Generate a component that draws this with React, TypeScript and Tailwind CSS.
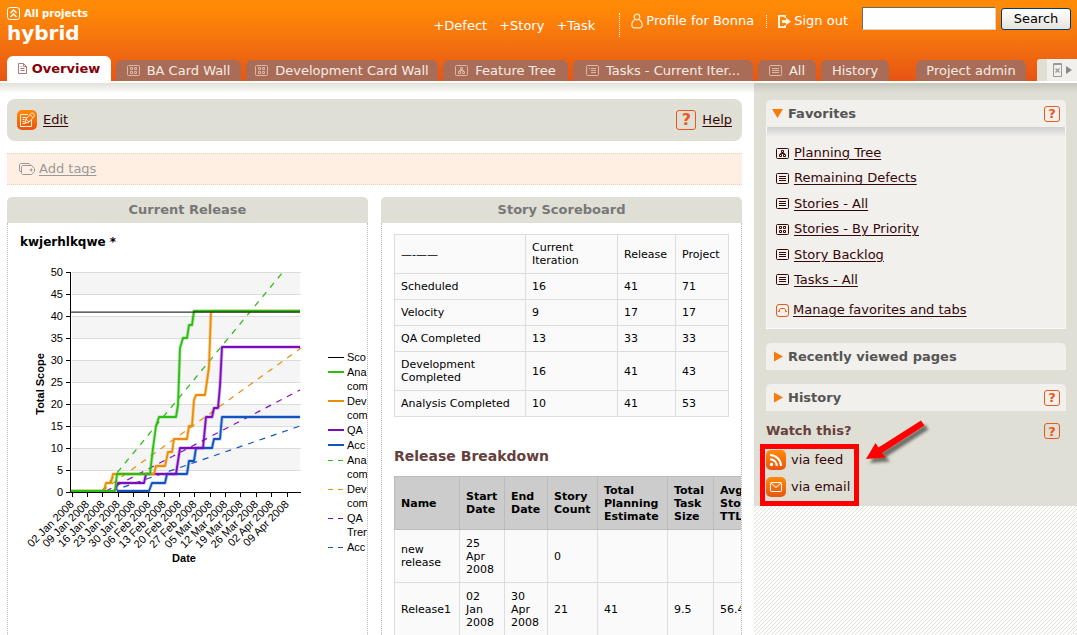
import React from "react";

type IconKind = "page" | "cards" | "tree" | "tasks" | "list";

function BoxIcon({ kind, className }: { kind: IconKind; className?: string }) {
  if (kind === "page") {
    return (
      <svg width="9" height="11" viewBox="0 0 9 11" fill="none" stroke="currentColor" className={className} aria-hidden="true">
        <path d="M.5 .5h5l3 3v7h-8zM5.5 .5v3h3M2.5 3.5h1M2.5 5.5h4M2.5 7.5h4" />
      </svg>
    );
  }
  return (
    <svg width="13" height="11" viewBox="0 0 13 11" fill="none" stroke="currentColor" className={className} aria-hidden="true">
      <rect x=".5" y=".5" width="12" height="10" rx="1" />
      {kind === "cards" && <path d="M3.5 2.5h2v2h-2zM7.5 2.5h2v2h-2zM3.5 6.5h2v2h-2zM7.5 6.5h2v2h-2z" />}
      {kind === "tree" && <path d="M5.5 2.5h2v2h-2zM3.5 6.5h2v2h-2zM7.5 6.5h2v2h-2zM6.5 4.5v1M4.5 6V5.5h4V6" />}
      {kind === "tasks" && <path d="M3 3.5h1M5 3.5h5M5 5.5h5M5 7.5h5" />}
      {kind === "list" && <path d="M3 3.5h7M3 5.5h7M3 7.5h7" />}
    </svg>
  );
}

function HelpMark({ large = false }: { large?: boolean }) {
  return (
    <button
      type="button"
      aria-label="Help on this section"
      className={
        large
          ? "flex size-5 items-center justify-center rounded-[3px] border border-[#e85a1b] text-base leading-none font-bold text-[#e85a1b]"
          : "flex size-4 items-center justify-center rounded-[3px] border border-[#e85a1b] text-[13px] leading-none font-bold text-[#e85a1b]"
      }
    >
      ?
    </button>
  );
}

const tabs: { label: string; icon?: IconKind; width: string }[] = [
  { label: "BA Card Wall", icon: "cards", width: "w-[125px]" },
  { label: "Development Card Wall", icon: "cards", width: "w-[192px]" },
  { label: "Feature Tree", icon: "tree", width: "w-[125px]" },
  { label: "Tasks - Current Iter...", icon: "tasks", width: "w-[180px]" },
  { label: "All", icon: "list", width: "w-[58px]" },
  { label: "History", width: "w-[68px]" },
];

const tabClass =
  "flex h-[21px] shrink-0 items-center justify-center gap-[7px] whitespace-nowrap rounded-t-[6px] bg-[#a96d57] text-[13px] text-[#f6ece6]";

function Header() {
  return (
    <header className="flex h-[81px] shrink-0 flex-col justify-between bg-linear-to-b from-[#ff8a06] from-10% to-[#e75413]">
      <div className="flex items-start justify-between pr-[6px] pl-[7px] text-white">
        <div className="pt-[7px]">
          <a href="#projects" className="flex h-[13px] items-center gap-1 text-[10px] font-bold">
            <svg width="13" height="13" viewBox="0 0 13 13" fill="none" stroke="currentColor" aria-hidden="true">
              <rect x=".5" y=".5" width="12" height="12" rx="2.5" />
              <path d="M3.5 6L6.5 3l3 3M3.5 10l3-3 3 3" strokeWidth="1.3" />
            </svg>
            All projects
          </a>
          <h1 className="text-xl leading-[26px] font-bold">hybrid</h1>
        </div>
        <div className="flex items-start text-[13px] leading-[18px] whitespace-nowrap">
          <nav className="flex gap-3 pt-[17px] pr-6" aria-label="Add card">
            <a href="#defect">+Defect</a>
            <a href="#story">+Story</a>
            <a href="#task">+Task</a>
          </nav>
          <div className="mt-[13px] h-6 border-l border-dotted border-white" />
          <a href="#profile" className="mt-3 flex items-center gap-[3px] pr-3 pl-[11px]">
            <svg width="12" height="16" viewBox="0 0 12 16" fill="none" stroke="#ffe9c4" strokeWidth="1.2" aria-hidden="true">
              <circle cx="6" cy="4" r="2.8" />
              <path d="M4.300 6.200C2 7.500 .8 9.600 .8 12c0 2 1.200 2.800 2.800 2.800h4.800c1.600 0 2.800-.8 2.800-2.800 0-2.400-1.200-4.500-3.500-5.800" />
            </svg>
            Profile for Bonna
          </a>
          <div className="mt-[15px] h-[13px] border-l border-dotted border-white" />
          <a href="#signout" className="mt-3 flex items-center gap-[3px] pr-3.5 pl-[11px]">
            <svg width="13" height="13" viewBox="0 0 13 13" fill="#fff3dc" aria-hidden="true">
              <path d="M0 0h8v3H6.500V1.800H2v9.400h4.500V10H8v3H0z" />
              <path d="M4 5h4V2.800L13 6.500 8 10.200V8H4z" />
            </svg>
            Sign out
          </a>
          <form className="flex items-start gap-[5px] pt-[7px]" onSubmit={(e) => e.preventDefault()}>
            <input
              type="text"
              aria-label="Search text"
              className="h-[23px] w-[134px] border border-t-[#6b6b62] border-r-[#d8d5ca] border-b-[#d8d5ca] border-l-[#6b6b62] bg-white px-1 text-black outline-none"
            />
            <button
              type="submit"
              className="mt-px h-[22px] w-[70px] rounded-[3px] border border-[#003c74] bg-linear-to-b from-white to-[#e6e4dc] text-[13px] leading-5 text-black"
            >
              Search
            </button>
          </form>
        </div>
      </div>
      <nav className="flex items-end gap-[5px] pl-[7px]" aria-label="Tabs">
        <a
          href="#overview"
          className="flex h-[25px] w-[104px] shrink-0 items-center justify-center gap-[5px] rounded-t-[6px] bg-white text-[13px] font-bold text-[#850309]"
        >
          <BoxIcon kind="page" className="text-[#b07a74]" />
          Overview
        </a>
        {tabs.map((t) => (
          <a key={t.label} href="#tab" className={`${tabClass} ${t.width}`}>
            {t.icon && <BoxIcon kind={t.icon} className="text-[#dcb7a8]" />}
            {t.label}
          </a>
        ))}
        <a href="#admin" className={`${tabClass} ml-[22px] w-[110px]`}>
          Project admin
        </a>
        <button
          type="button"
          aria-label="Toggle sidebar"
          className="ml-auto flex h-[22px] w-10 shrink-0 items-center gap-1 rounded-tl-[3px] border-l-10 border-[#dfdfd5] bg-[#f1f0ec] pl-1.5"
        >
          <svg width="9" height="14" viewBox="0 0 9 14" className="shrink-0" fill="none" stroke="#999" aria-hidden="true">
            <path d="M.5 .5h8v13h-8zM0 1.500h9" />
            <path d="M2.500 5.500l4 4M6.500 5.500l-4 4" strokeWidth="1.300" />
          </svg>
          <svg width="6" height="8" viewBox="0 0 6 8" className="shrink-0" fill="#888" aria-hidden="true">
            <path d="M0 0l6 4-6 4z" />
          </svg>
        </button>
      </nav>
    </header>
  );
}

type Pt = [number, number];

const GREEN = "#2dbd14";
const ORANGE = "#ea8e06";
const PURPLE = "#7c0bbd";
const BLUE = "#1154c0";

const series: { color: string; points: Pt[] }[] = [
  {
    color: BLUE,
    points: [[117, 491], [149, 491], [152, 483], [165, 483], [167, 474], [187, 474], [189, 461], [194, 461], [196, 448], [212, 448], [214, 439], [220, 439], [222, 417], [300, 417]],
  },
  {
    color: PURPLE,
    points: [[115, 491], [118, 483], [144, 483], [146, 474], [176, 474], [180, 448], [203, 448], [206, 417], [212, 417], [214, 408], [218, 408], [220, 386], [222, 347], [300, 347]],
  },
  {
    color: ORANGE,
    points: [[71, 491], [104, 491], [106, 483], [111, 483], [113, 474], [154, 474], [156, 466], [165, 466], [168, 452], [172, 452], [174, 439], [187, 439], [189, 426], [192, 426], [194, 400], [196, 395], [205, 395], [209, 367], [211, 311], [300, 311]],
  },
  {
    color: GREEN,
    points: [[71, 491], [115, 491], [117, 474], [150, 474], [153, 448], [156, 426], [159, 417], [176, 417], [178, 405], [180, 348], [183, 338], [187, 338], [189, 325], [192, 325], [194, 311], [300, 311]],
  },
];

const trends: { color: string; from: Pt; to: Pt }[] = [
  { color: GREEN, from: [102, 491], to: [283, 272] },
  { color: ORANGE, from: [102, 491], to: [301, 348] },
  { color: PURPLE, from: [106, 491], to: [300, 390] },
  { color: BLUE, from: [112, 491], to: [300, 426] },
];

const dates = [
  "02 Jan 2008", "09 Jan 2008", "16 Jan 2008", "23 Jan 2008", "30 Jan 2008",
  "06 Feb 2008", "13 Feb 2008", "20 Feb 2008", "27 Feb 2008", "05 Mar 2008",
  "12 Mar 2008", "19 Mar 2008", "26 Mar 2008", "02 Apr 2008", "09 Apr 2008",
];

const legend: { y: number; text: string; color?: string; dash?: boolean; thin?: boolean }[] = [
  { y: 357, text: "Sco", color: "#000", thin: true },
  { y: 372, text: "Ana", color: GREEN },
  { y: 386, text: "com" },
  { y: 401, text: "Dev", color: ORANGE },
  { y: 415, text: "com" },
  { y: 430, text: "QA", color: PURPLE },
  { y: 445, text: "Acc", color: BLUE },
  { y: 460, text: "Ana", color: GREEN, dash: true },
  { y: 474, text: "com" },
  { y: 489, text: "Dev", color: ORANGE, dash: true },
  { y: 503, text: "com" },
  { y: 518, text: "QA", color: PURPLE, dash: true },
  { y: 532, text: "Tren" },
  { y: 547, text: "Acc", color: BLUE, dash: true },
];

const toPath = (pts: Pt[]) => pts.map((p) => p.join(",")).join(" ");

function BurnUpChart() {
  return (
    <svg
      width="347"
      height="310"
      viewBox="20 262 347 310"
      className="block overflow-hidden font-['Liberation_Sans',sans-serif] text-[11px]"
      role="img"
      aria-label="Total scope by date"
    >
      {[0, 2, 4, 6, 8].map((i) => (
        <rect key={i} x="72" y={272 + i * 22} width="228" height="22" fill="#f5f5f5" />
      ))}
      {Array.from({ length: 11 }, (_, i) => {
        const y = 272 + i * 22;
        return (
          <g key={i}>
            <path d={`M72 ${y + 0.5}h229`} stroke="#dcdcdc" />
            <path d={`M66 ${y + 0.5}h4`} stroke="#000" />
            <text x="63" y={y + 4} textAnchor="end">
              {50 - i * 5}
            </text>
          </g>
        );
      })}
      {trends.map((t) => (
        <line
          key={t.color}
          x1={t.from[0]}
          y1={t.from[1]}
          x2={t.to[0]}
          y2={t.to[1]}
          stroke={t.color}
          strokeWidth="1.200"
          strokeDasharray="6 6"
        />
      ))}
      {series.map((s) => (
        <g key={s.color} fill="none" strokeLinejoin="round" stroke={s.color}>
          <polyline points={toPath(s.points)} strokeWidth="3.500" opacity=".3" />
          <polyline points={toPath(s.points)} strokeWidth="1.800" />
        </g>
      ))}
      <path d="M71 311.500h229" stroke="#000" opacity=".4" />
      <path d="M71 312.500h229" stroke="#2a2323" opacity=".7" />
      <path d="M70.500 272v220.500H301" fill="none" stroke="#000" />
      {dates.map((d, i) => {
        const x = 71.5 + i * 15.36;
        return (
          <g key={d}>
            <path d={`M${Math.round(x) + 0.5} 492v5`} stroke="#000" />
            <text transform={`translate(${x + 3} 505) rotate(-45)`} textAnchor="end">
              {d}
            </text>
          </g>
        );
      })}
      <text transform="translate(44 384) rotate(-90)" textAnchor="middle" fontWeight="bold">
        Total Scope
      </text>
      <text x="184" y="562" textAnchor="middle" fontWeight="bold">
        Date
      </text>
      {legend.map((l) => (
        <g key={l.y}>
          {l.color && (
            <path
              d={`M328 ${l.thin || l.dash ? l.y + 0.5 : l.y}h16`}
              stroke={l.color}
              strokeWidth={l.thin || l.dash ? 1 : 2}
              strokeDasharray={l.dash ? "5 5" : undefined}
            />
          )}
          <text x="347" y={l.y + 4}>
            {l.text}
          </text>
        </g>
      ))}
    </svg>
  );
}

function Widget({ title, children }: { title: string; children: React.ReactNode }) {
  return (
    <section className="flex min-w-0 flex-col overflow-hidden">
      <h2 className="h-[26px] shrink-0 rounded-t-[5px] bg-[#dfdfd5] text-center text-[13px] leading-[26px] font-bold text-[#777]">
        {title}
      </h2>
      <div className="flex-1 overflow-hidden border-x border-dotted border-[#bbb] pl-3">{children}</div>
    </section>
  );
}

const scoreRows = [
  ["Scheduled", "16", "41", "71"],
  ["Velocity", "9", "17", "17"],
  ["QA Completed", "13", "33", "33"],
  ["Development Completed", "16", "41", "43"],
  ["Analysis Completed", "10", "41", "53"],
];

const cell = "border border-[#ddd] bg-[#fafafa] p-1.5 text-left font-normal";

function Scoreboard() {
  return (
    <table className="mt-[11px] w-[335px] table-fixed border-collapse text-[11px] leading-[13px]">
      <colgroup>
        <col className="w-[131px]" />
        <col className="w-[92px]" />
        <col className="w-[58px]" />
        <col />
      </colgroup>
      <thead>
        <tr>
          <th className={cell}>—-——</th>
          <th className={cell}>
            Current
            <br />
            Iteration
          </th>
          <th className={cell}>Release</th>
          <th className={cell}>Project</th>
        </tr>
      </thead>
      <tbody>
        {scoreRows.map((r) => (
          <tr key={r[0]}>
            {r.map((c, i) => (
              <td key={i} className={cell}>
                {c}
              </td>
            ))}
          </tr>
        ))}
      </tbody>
    </table>
  );
}

const releaseHeads = ["Name", "Start Date", "End Date", "Story Count", "Total Planning Estimate", "Total Task Size", "Avg Story TTL"];
const releaseRows = [
  ["new release", "25 Apr 2008", "", "0", "", "", ""],
  ["Release1", "02 Jan 2008", "30 Apr 2008", "21", "41", "9.5", "56.4"],
];

function ReleaseTable() {
  return (
    <table className="w-[370px] table-fixed border-collapse text-[11px] leading-[13px]">
      <colgroup>
        <col className="w-[65px]" />
        <col className="w-[45px]" />
        <col className="w-[43px]" />
        <col className="w-[50px]" />
        <col className="w-[70px]" />
        <col className="w-[46px]" />
        <col />
      </colgroup>
      <thead>
        <tr className="h-[53px]">
          {releaseHeads.map((h) => (
            <th key={h} className="border border-[#bbb] bg-[#ccc] py-1.5 pl-1.5 text-left font-bold">
              {h}
            </th>
          ))}
        </tr>
      </thead>
      <tbody>
        {releaseRows.map((r) => (
          <tr key={r[0]} className="h-[53px]">
            {r.map((c, i) => (
              <td key={i} className="border border-[#ddd] bg-[#fafafa] p-1.5">
                {c}
              </td>
            ))}
          </tr>
        ))}
      </tbody>
    </table>
  );
}

const favorites: { label: string; icon: IconKind }[] = [
  { label: "Planning Tree", icon: "tree" },
  { label: "Remaining Defects", icon: "list" },
  { label: "Stories - All", icon: "list" },
  { label: "Stories - By Priority", icon: "cards" },
  { label: "Story Backlog", icon: "list" },
  { label: "Tasks - All", icon: "list" },
];

function PanelHead({ title, open = false, help = false }: { title: string; open?: boolean; help?: boolean }) {
  return (
    <div className="flex h-[27px] items-center gap-[5px] rounded-t-[5px] bg-[#f1f0ec] px-1.5 text-[13px] font-bold text-[#555]">
      <svg width="11" height="11" viewBox="0 0 11 11" fill="#f77b0b" aria-hidden="true">
        {open ? <path d="M0 1h11L5.500 10z" /> : <path d="M2 .5l9 5-9 5z" />}
      </svg>
      <h2 className="flex-1">{title}</h2>
      {help && <HelpMark />}
    </div>
  );
}

function OrangeTile({ children }: { children: React.ReactNode }) {
  return (
    <span className="flex size-5 items-center justify-center rounded-[5px] bg-linear-to-b from-[#ff8a06] to-[#e75413]">
      {children}
    </span>
  );
}

function Sidebar() {
  return (
    <aside className="w-[323px] shrink-0 bg-[linear-gradient(135deg,#dfdfd8_12.5%,#fff_12.5%_50%,#dfdfd8_50%_62.5%,#fff_62.5%)] bg-[length:4px_4px]">
      <div className="bg-[#dfdfd5]">
        <div className="h-[17px] bg-linear-to-b from-[#c6c6bd] to-[#dfdfd5] to-60%" />
        <div className="flex flex-col pr-[11px] pl-3">
          <section>
            <PanelHead title="Favorites" open help />
            <div className="border-x border-b border-dotted border-white bg-[#f1f0ec] pb-[9px]">
              <div className="h-2.5 bg-linear-to-b from-[#d0d0d0] to-[#f1f0ec]" />
              <ul className="flex h-[152px] flex-col justify-between pt-[7px] pl-[9px] text-[13px] leading-[18px] text-[#350608]">
                {favorites.map((f) => (
                  <li key={f.label} className="flex h-[18px] items-center gap-[5px]">
                    <BoxIcon kind={f.icon} />
                    <a href="#favorite" className="underline underline-offset-2">
                      {f.label}
                    </a>
                  </li>
                ))}
              </ul>
              <div className="mt-3 flex items-center gap-1 pl-[9px] text-[13px] leading-[18px] text-[#350608]">
                <svg width="13" height="13" viewBox="0 0 13 13" fill="none" stroke="#e85a1b" aria-hidden="true">
                  <rect x=".5" y=".5" width="12" height="12" rx="2.500" />
                  <path d="M2 7.500h1.500v-2l1-1h4l1 1v2H11" />
                </svg>
                <a href="#manage" className="underline underline-offset-2">
                  Manage favorites and tabs
                </a>
              </div>
            </div>
          </section>
          <section className="mt-3.5">
            <PanelHead title="Recently viewed pages" />
          </section>
          <section className="mt-3.5">
            <PanelHead title="History" help />
          </section>
          <section className="relative">
            <div className="mt-2.5 flex h-5 items-center justify-between pr-1.5 text-[13px] font-bold text-[#66403c]">
              <h2>Watch this?</h2>
              <HelpMark />
            </div>
            <div className="flex flex-col gap-[7px] pt-[9px] pb-[9px] text-[13px] text-[#350608]">
              <a href="#feed" className="flex h-5 items-center gap-[5px]">
                <OrangeTile>
                  <svg width="14" height="14" viewBox="0 0 14 14" fill="none" stroke="#fff" strokeWidth="2" aria-hidden="true">
                    <circle cx="2.500" cy="11.500" r="1.700" fill="#fff" stroke="none" />
                    <path d="M1 6.200a6.800 6.800 0 0 1 6.800 6.800M1 2a11 11 0 0 1 11 11" />
                  </svg>
                </OrangeTile>
                via feed
              </a>
              <a href="#email" className="flex h-5 items-center gap-[5px]">
                <OrangeTile>
                  <svg width="12" height="10" viewBox="0 0 12 10" fill="none" stroke="#fff" aria-hidden="true">
                    <rect x=".5" y=".5" width="11" height="9" rx="1" />
                    <path d="M1 1l5 4.500L11 1" />
                  </svg>
                </OrangeTile>
                via email
              </a>
            </div>
            <div className="pointer-events-none absolute bottom-0 -left-1.5 h-[62px] w-[99px] border-5 border-[#f00]" />
            <svg
              width="70"
              height="50"
              viewBox="0 0 70 50"
              className="pointer-events-none absolute bottom-[38px] left-[98px] overflow-visible"
              aria-hidden="true"
            >
              <defs>
                <filter id="arrow-shadow" x="-20%" y="-20%" width="150%" height="150%">
                  <feDropShadow dx="4" dy="4" stdDeviation="1.500" floodColor="#000" floodOpacity=".5" />
                </filter>
              </defs>
              <path d="M57 2.500l3.500 5-42.500 27.500 4 4.500L2 41l9.500-16 3 4.500z" fill="#f00" filter="url(#arrow-shadow)" />
            </svg>
          </section>
        </div>
      </div>
    </aside>
  );
}

export default function App() {
  return (
    <div className="flex h-screen flex-col overflow-hidden bg-white font-['DejaVu_Sans',sans-serif] text-black">
      <Header />
      <div className="mt-0.5 flex min-h-0 flex-1">
        <main className="flex min-w-0 flex-1 flex-col">
          <div className="h-4 shrink-0 bg-linear-to-b from-[#e2e2dc] to-white to-70%" />
          <div className="flex min-h-0 flex-1 flex-col gap-3 pr-3 pl-[7px]">
            <div className="flex h-[42px] shrink-0 items-center justify-between rounded-lg bg-[#dfdfd5] px-2.5 text-[13px] text-[#350608]">
              <a href="#edit" className="flex items-center gap-1.5 underline underline-offset-2">
                <OrangeTile>
                  <svg width="18" height="18" viewBox="0 0 18 18" fill="none" stroke="#fff0dc" aria-hidden="true">
                    <path d="M10 3.500H2.500v12h11V9M4.500 6.500h4M4.500 8.500h2M4.500 10.500h2M4.500 12.500h3" />
                    <path d="M7 12l1-4 5-5.500c1.500-1.500 4.500 1 3 3L11 11zM8 8l3 3M12.500 4l2.500 2.500" />
                  </svg>
                </OrangeTile>
                Edit
              </a>
              <div className="flex items-center gap-1.5">
                <HelpMark large />
                <a href="#help" className="underline underline-offset-2">
                  Help
                </a>
              </div>
            </div>
            <div className="flex h-8 shrink-0 items-center gap-1 border-y border-dotted border-[#e6cfbd] bg-[#ffefe3] pl-3 text-[13px] text-[#999]">
              <svg width="16" height="12" viewBox="0 0 16 12" fill="none" stroke="#999" aria-hidden="true">
                <path d="M2 8.500H1L.5 8V1.500l1-1H10l2 2" />
                <path d="M3.500 2.500h9l3 3v3l-3 3h-9l-1-1v-7zM10.500 7h3M12.500 5.500v3" />
              </svg>
              <a href="#tags" className="underline underline-offset-2">
                Add tags
              </a>
            </div>
            <div className="grid min-h-0 flex-1 grid-cols-2 gap-[13px]">
              <Widget title="Current Release">
                <h3 className="mt-3 mb-3 text-xs leading-[15px] font-bold">kwjerhlkqwe *</h3>
                <BurnUpChart />
              </Widget>
              <Widget title="Story Scoreboard">
                <Scoreboard />
                <h3 className="mt-[29px] mb-2.5 text-sm leading-5 font-bold text-[#66403c]">Release Breakdown</h3>
                <ReleaseTable />
              </Widget>
            </div>
          </div>
        </main>
        <Sidebar />
      </div>
    </div>
  );
}
